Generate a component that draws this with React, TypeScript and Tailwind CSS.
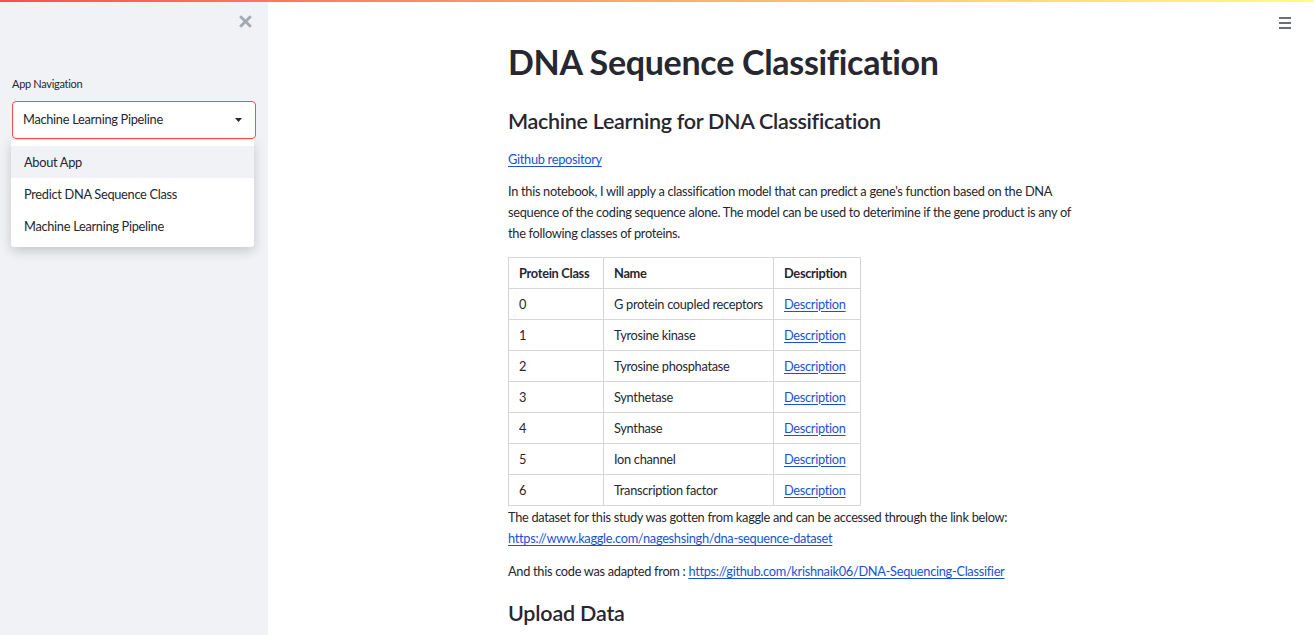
import React from 'react'

const font = { fontFamily: 'Lato, "Noto Sans", sans-serif' }

const rows = [
  ['0', 'G protein coupled receptors'],
  ['1', 'Tyrosine kinase'],
  ['2', 'Tyrosine phosphatase'],
  ['3', 'Synthetase'],
  ['4', 'Synthase'],
  ['5', 'Ion channel'],
  ['6', 'Transcription factor'],
]

const Sidebar = () => {
  return (
    <div className="relative w-[268px] shrink-0 bg-[#f0f2f6] h-full tracking-[-0.3px]">
      {/* close button */}
      <div className="flex justify-end pt-[15px] pr-[16px]">
        <svg width="13" height="13" viewBox="0 0 12 12">
          <path d="M2 2L10 10M10 2L2 10" stroke="#a3a8b4" strokeWidth="2.6" strokeLinecap="square" />
        </svg>
      </div>
      <div className="px-[12px] pt-[50px]">
        <div className="text-[11px] text-[#262730] leading-none mb-[12px]">App Navigation</div>
        <div className="flex items-center justify-between h-[38px] bg-white border border-[#ff4b4b] rounded-[4px] pl-[10px] pr-[13px] text-[12.8px] text-[#262730]">
          <span>Machine Learning Pipeline</span>
          <svg width="7" height="4" viewBox="0 0 7 4">
            <path d="M0 0H7L3.5 4Z" fill="#262730" />
          </svg>
        </div>
      </div>
      {/* dropdown menu */}
      <div className="absolute left-[11px] top-[140px] w-[243px] bg-white rounded-b-[3px] shadow-[0_4px_12px_rgba(0,0,0,0.18)] pt-[6px] pb-[5px] text-[12.8px] text-[#262730]">
        <div className="h-[32px] flex items-center pt-[2px] px-[13px] bg-[#f0f2f6]">About App</div>
        <div className="h-[32px] flex items-center pt-[2px] px-[13px]">Predict DNA Sequence Class</div>
        <div className="h-[32px] flex items-center pt-[2px] px-[13px]">Machine Learning Pipeline</div>
      </div>
    </div>
  )
}

const Link = ({ children }: { children: React.ReactNode }) => (
  <a className="text-[#1a52d6] underline underline-offset-[2px]">{children}</a>
)

const cell = 'border border-[#d6d6d6] px-[10px] whitespace-nowrap'

export default function App() {
  return (
    <div className="relative w-[1314px] h-[635px] overflow-hidden bg-white" style={font}>
      <div className="absolute top-0 left-0 right-0 h-[2px] bg-gradient-to-r from-[#ff4b4b] to-[#fffd80] z-10" />
      <div className="flex h-full">
        <Sidebar />
        <div className="relative flex-1">
          {/* hamburger */}
          <div className="absolute right-[23px] top-[17px] flex flex-col gap-[3px]">
            <div className="w-[12px] h-[2px] bg-[#6b6f7a]" />
            <div className="w-[12px] h-[2px] bg-[#6b6f7a]" />
            <div className="w-[12px] h-[2px] bg-[#6b6f7a]" />
          </div>
          <div className="ml-[240px] w-[580px] pt-[40px] text-[#262730] text-[12.8px] leading-[21px] tracking-[-0.3px]">
            <h1 className="text-[34px] font-bold leading-[44px] mb-[23px]">DNA Sequence Classification</h1>
            <h2 className="text-[21.5px] font-semibold leading-[28px] mb-[14px] tracking-[-0.3px]">Machine Learning for DNA Classification</h2>
            <p className="mb-[11px]"><Link>Github repository</Link></p>
            <p className="mb-[13px]">
              In this notebook, I will apply a classification model that can predict a gene's function based on the DNA
              sequence of the coding sequence alone. The model can be used to deterimine if the gene product is any of
              the following classes of proteins.
            </p>
            <table className="border-collapse table-fixed">
              <thead>
                <tr className="h-[31px]">
                  <th className={`${cell} text-left font-bold w-[95px]`}>Protein Class</th>
                  <th className={`${cell} text-left font-bold w-[170px]`}>Name</th>
                  <th className={`${cell} text-left font-bold w-[87px]`}>Description</th>
                </tr>
              </thead>
              <tbody>
                {rows.map(([n, name]) => (
                  <tr key={n} className="h-[31px]">
                    <td className={cell}>{n}</td>
                    <td className={cell}>{name}</td>
                    <td className={cell}><Link>Description</Link></td>
                  </tr>
                ))}
              </tbody>
            </table>
            <p className="mt-[1px] mb-[12px]">
              The dataset for this study was gotten from kaggle and can be accessed through the link below:
              <br />
              <Link>https://www.kaggle.com/nageshsingh/dna-sequence-dataset</Link>
            </p>
            <p className="mb-[18px]">
              And this code was adapted from : <Link>https://github.com/krishnaik06/DNA-Sequencing-Classifier</Link>
            </p>
            <h3 className="text-[21.5px] font-semibold leading-[26px] tracking-[-0.2px]">Upload Data</h3>
          </div>
        </div>
      </div>
    </div>
  )
}
